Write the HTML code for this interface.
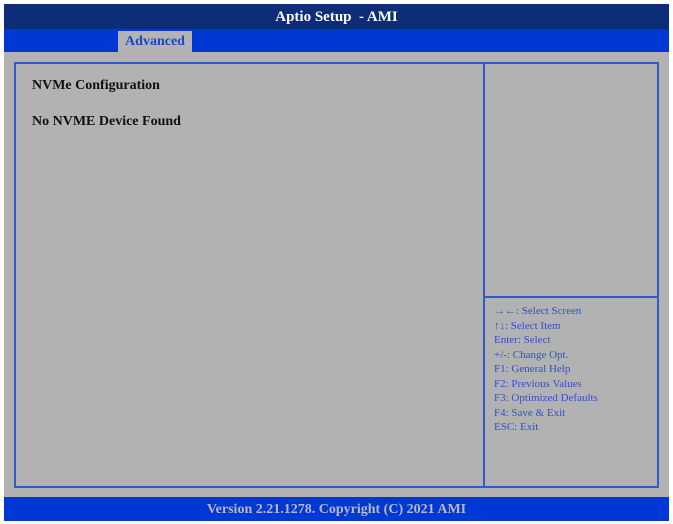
<!DOCTYPE html>
<html><head><style>
body{margin:0;width:673px;height:524px;background:#fff;position:relative;overflow:hidden;font-family:"Liberation Serif",serif}
div{position:absolute;box-sizing:border-box}
.top{left:4px;top:4px;width:665px;height:25px;background:#0d2d78;color:#fff;font-weight:bold;font-size:15px;text-align:center;line-height:27px}
.tabs{left:4px;top:29px;width:665px;height:23px;background:#0038d6}
.tab{left:118px;top:31px;width:74px;height:21px;background:#b3b3b3;color:#1848c8;font-weight:bold;font-size:14px;text-align:center;line-height:22px}
.gray{left:4px;top:52px;width:665px;height:445px;background:#b3b2b2}
.box{left:14px;top:62px;width:645px;height:426px;border:2px solid #2f5ad0}
.vl{left:483px;top:62px;width:2px;height:426px;background:#2f5ad0}
.hl{left:483px;top:296px;width:176px;height:2px;background:#2f5ad0}
.t{color:#111;font-weight:bold;font-size:14px}
.help{left:494px;top:304px;color:#3050c8;font-size:11px;line-height:14.5px}
.foot{left:4px;top:497px;width:665px;height:24px;background:#0038d6;color:#b8b8c8;font-weight:bold;font-size:14px;text-align:center;line-height:26px}
</style></head><body>
<div class="top">Aptio Setup &nbsp;- AMI</div>
<div class="tabs"></div>
<div class="tab">Advanced</div>
<div class="gray"></div>
<div class="box"></div>
<div class="vl"></div>
<div class="hl"></div>
<div class="t" style="left:32px;top:78px">NVMe Configuration</div>
<div class="t" style="left:32px;top:114px">No NVME Device Found</div>
<div class="help">→←: Select Screen<br>↑↓: Select Item<br>Enter: Select<br>+/-: Change Opt.<br>F1: General Help<br>F2: Previous Values<br>F3: Optimized Defaults<br>F4: Save &amp; Exit<br>ESC: Exit</div>
<div class="foot">Version 2.21.1278. Copyright (C) 2021 AMI</div>
</body></html>
